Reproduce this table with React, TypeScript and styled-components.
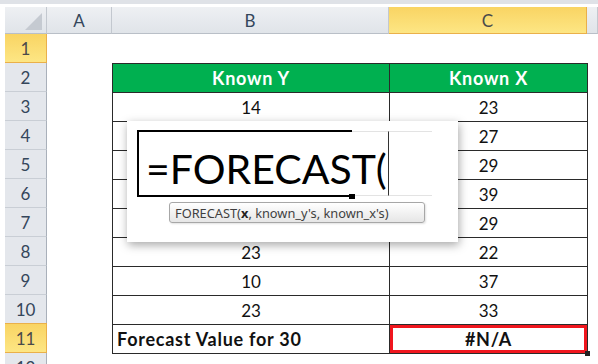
import React from "react";
import styled, { createGlobalStyle, css } from "styled-components";

const GlobalStyle = createGlobalStyle`
  html, body { margin: 0; padding: 0; background: #ffffff; }
  body { font-family: "Lato", "Open Sans", sans-serif; }
  * { box-sizing: border-box; }
`;

const Page = styled.div`
  position: relative;
  width: 598px;
  height: 364px;
  overflow: hidden;
  border-top: 4px solid #dfe2e7;
  padding-top: 3px;
  padding-left: 5px;
`;

const Sheet = styled.div`
  display: grid;
  grid-template-columns: 42px 65px 277px 198px 1fr;
  grid-template-rows: 27px repeat(12, 29px);
`;

const activeHead = css`
  background: linear-gradient(#f9d463, #fde684);
  border-color: #eab04a;
  color: #4a4a4a;
`;

const Corner = styled.div`
  position: relative;
  background: linear-gradient(#eef0f3, #e0e4e9);
  border-right: 1px solid #c3c8cf;
  border-bottom: 1px solid #b9bfc7;
  &::after {
    content: "";
    position: absolute;
    right: 4px;
    bottom: 3px;
    width: 0;
    height: 0;
    border-left: 17px solid transparent;
    border-bottom: 17px solid #c5cad1;
  }
`;

const ColHead = styled.div<{ $active?: boolean }>`
  display: flex;
  align-items: center;
  justify-content: center;
  background: linear-gradient(#eef0f3, #e0e4e9);
  border-right: 1px solid #c3c8cf;
  border-bottom: 1px solid #b9bfc7;
  color: #34465b;
  font-size: 17px;
  ${(p) => p.$active && activeHead}
`;

const RowHead = styled.div<{ $row: number; $active?: boolean }>`
  grid-column: 1;
  grid-row: ${(p) => p.$row + 1};
  display: flex;
  align-items: center;
  justify-content: center;
  background: #e4e7ec;
  border-right: 1px solid #a9b0ba;
  border-bottom: 1px solid #c9ced5;
  color: #34465b;
  font-size: 17px;
  ${(p) => p.$active && activeHead}
  ${(p) => p.$active && css`border-top: 1px solid #eab04a; margin-top: -1px;`}
`;

const DataTable = styled.table`
  grid-column: 3 / 5;
  grid-row: 3 / 13;
  border-collapse: collapse;
  table-layout: fixed;
  width: 475px;
  font-size: 17px;
  color: #111;
`;

const Cell = styled.td<{ $head?: boolean; $bold?: boolean; $left?: boolean; $flag?: boolean }>`
  position: relative;
  height: 29px;
  padding: 0 4px;
  border: 1px solid #2a2a2a;
  text-align: ${(p) => (p.$left ? "left" : "center")};
  vertical-align: middle;
  white-space: nowrap;
  ${(p) =>
    (p.$bold || p.$head) &&
    css`
      font-weight: 700;
      font-size: 18px;
      letter-spacing: 0.75px;
    `}
  ${(p) =>
    p.$head &&
    css`
      background: #00b050;
      color: #ffffff;
    `}
  ${(p) =>
    p.$flag &&
    css`
      box-shadow: inset 0 0 0 3px #f0161e;
      &::after {
        content: "";
        position: absolute;
        right: -3px;
        bottom: -3px;
        width: 5px;
        height: 5px;
        background: #222;
      }
    `}
`;

/* zoomed view of the cell being edited */
const Popup = styled.div`
  position: absolute;
  left: 127px;
  top: 117px;
  width: 331px;
  height: 121px;
  background: #ffffff;
  box-shadow: 1px 3px 9px rgba(0, 0, 0, 0.35);
  padding: 9px 0 0 10px;
  display: flex;
  flex-direction: column;
`;

const EditRow = styled.div`
  display: flex;
  height: 67px;
`;

const EditCell = styled.div`
  position: relative;
  width: 215px;
  height: 67px;
  border: 2px solid #000;
  border-right: none;
  padding: 16px 0 0 7px;
  overflow: visible;
  white-space: nowrap;
  font-family: "Lato", sans-serif;
  font-size: 41px;
  line-height: 41px;
  color: #000;
  z-index: 1;
  &::after {
    content: "";
    position: absolute;
    right: -3px;
    bottom: -4px;
    width: 6px;
    height: 5px;
    background: #000;
  }
`;

const GhostCell = styled.div<{ $w: number; $divider?: boolean }>`
  width: ${(p) => p.$w}px;
  margin-top: 1px;
  height: 65px;
  border-top: 1px solid #e3e3e3;
  border-bottom: 1px solid #e3e3e3;
  ${(p) => p.$divider && css`border-right: 1px solid #333;`}
`;

const Tip = styled.div`
  align-self: flex-start;
  margin: 5px 0 0 32px;
  width: 256px;
  height: 21px;
  display: flex;
  align-items: center;
  padding-left: 5px;
  border: 1px solid #a7a7a7;
  border-radius: 3px;
  background: linear-gradient(#ffffff, #e6e6e6);
  box-shadow: 1px 1px 2px rgba(0, 0, 0, 0.12);
  font-family: "Noto Sans", "Open Sans", sans-serif;
  font-size: 12.8px;
  color: #3f3f3f;
  white-space: nowrap;
  b { font-weight: 700; color: #222; }
`;

// rows 4–7 of Known Y sit under the edit view, so they are left blank
const knownY = ["14", "", "", "", "", "23", "10", "23"];
const knownX = ["23", "27", "29", "39", "29", "22", "37", "33"];

export default function App() {
  const rows = Array.from({ length: 12 }, (_, i) => i + 1);
  return (
    <>
      <GlobalStyle />
      <Page>
        <Sheet>
          <Corner />
          <ColHead>A</ColHead>
          <ColHead>B</ColHead>
          <ColHead $active>C</ColHead>
          <ColHead />
          {rows.map((r) => (
            <RowHead key={r} $row={r} $active={r === 1 || r === 11}>
              {r}
            </RowHead>
          ))}
          <DataTable>
            <colgroup>
              <col style={{ width: 277 }} />
              <col style={{ width: 198 }} />
            </colgroup>
            <tbody>
              <tr>
                <Cell $head>Known Y</Cell>
                <Cell $head>Known X</Cell>
              </tr>
              {knownY.map((y, i) => (
                <tr key={i}>
                  <Cell>{y}</Cell>
                  <Cell>{knownX[i]}</Cell>
                </tr>
              ))}
              <tr>
                <Cell $bold $left>
                  Forecast Value for 30
                </Cell>
                <Cell $bold $flag>
                  #N/A
                </Cell>
              </tr>
            </tbody>
          </DataTable>
        </Sheet>
        <Popup>
          <EditRow>
            <EditCell>=FORECAST(</EditCell>
            <GhostCell $w={37} $divider />
            <GhostCell $w={43} />
          </EditRow>
          <Tip>
            FORECAST(<b>x</b>, known_y's, known_x's)
          </Tip>
        </Popup>
      </Page>
    </>
  );
}
